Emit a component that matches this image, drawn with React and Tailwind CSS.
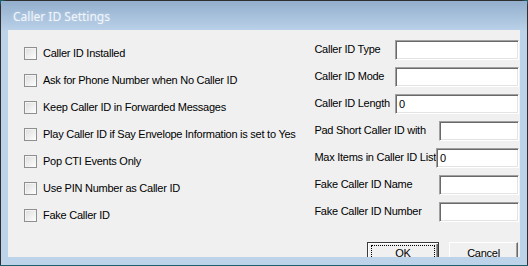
import React from 'react';

const checks = [
    'Caller ID Installed',
    'Ask for Phone Number when No Caller ID',
    'Keep Caller ID in Forwarded Messages',
    'Play Caller ID if Say Envelope Information is set to Yes',
    'Pop CTI Events Only',
    'Use PIN Number as Caller ID',
    'Fake Caller ID',
];

const fields = [
    { label: 'Caller ID Type', width: 'w-[124px]', value: '' },
    { label: 'Caller ID Mode', width: 'w-[124px]', value: '' },
    { label: 'Caller ID Length', width: 'w-[124px]', value: '0' },
    { label: 'Pad Short Caller ID with', width: 'w-[80px]', value: '' },
    { label: 'Max Items in Caller ID List', width: 'w-[83px]', value: '0' },
    { label: 'Fake Caller ID Name', width: 'w-[80px]', value: '' },
    { label: 'Fake Caller ID Number', width: 'w-[80px]', value: '' },
];

function CheckBox() {
    return (
        <span className="block h-[13px] w-[13px] shrink-0 border border-[#8e8f8f] bg-gradient-to-br from-[#dcdcdc] to-white shadow-[inset_1px_1px_0_#f4f4f4]" />
    );
}

function Field({ width, value }) {
    return (
        <div
            className={`${width} h-[20px] shrink-0 border border-t-[#a0a0a0] border-l-[#a0a0a0] border-b-white border-r-white bg-white pl-[3px] leading-[18px] shadow-[inset_1px_1px_0_#696969,inset_-1px_-1px_0_#e3e3e3]`}
        >
            {value}
        </div>
    );
}

export default function App() {
    return (
        <div
            className="h-[266px] w-[528px] overflow-hidden bg-[#1f5f6d] text-[11px] tracking-[-0.25px] text-black"
            style={{ fontFamily: '"Liberation Sans", Arial, sans-serif' }}
        >
            <div className="flex h-[265px] flex-col rounded-t-[6px] border border-[#2f2f2f] border-b-0 bg-[#bcd3ea]">
                {/* Title bar */}
                <div className="flex h-[29px] items-center bg-gradient-to-b from-[#93afcd] to-[#b9d0e8] pl-[12px] pt-[2px]">
                    <span
                        className="text-[12px] tracking-normal text-[#f2f6fb] [text-shadow:0_0_3px_#c6d8ec]"
                        style={{ fontFamily: '"Noto Sans", "Open Sans", sans-serif' }}
                    >
                        Caller ID Settings
                    </span>
                </div>

                {/* Client area */}
                <div className="mx-[7px] h-[227px] overflow-hidden bg-[#f0f0f0]">
                    <div className="flex">
                        {/* Checkboxes */}
                        <div className="flex w-[308px] flex-col pl-[16px] pt-[10px]">
                            {checks.map((c) => (
                                <div key={c} className="flex h-[27px] items-center gap-[6px] whitespace-nowrap">
                                    <CheckBox />
                                    <span>{c}</span>
                                </div>
                            ))}
                        </div>

                        {/* Text fields */}
                        <div className="flex flex-1 flex-col pt-[6px] pr-[1px]">
                            {fields.map((f) => (
                                <div key={f.label} className="flex h-[27px] items-center whitespace-nowrap">
                                    <span>{f.label}</span>
                                    <div className="ml-auto">
                                        <Field width={f.width} value={f.value} />
                                    </div>
                                </div>
                            ))}
                        </div>
                    </div>

                    {/* Buttons */}
                    <div className="mt-[13px] flex justify-end gap-[10px] pr-[2px]">
                        <button className="flex h-[23px] w-[72px] flex-col border border-[#3c3c3c] bg-[#f0f0f0] px-[3px] pt-[2px] shadow-[inset_1px_1px_0_#fff,inset_-1px_-1px_0_#696969,inset_-2px_-2px_0_#a0a0a0]">
                            <span className="block h-[16px] border border-dotted border-black pt-[1px] leading-[12px]">
                                <u>O</u>K
                            </span>
                        </button>
                        <button className="flex h-[23px] w-[69px] justify-center border border-t-white border-l-white border-b-[#696969] border-r-[#696969] bg-[#f0f0f0] pt-[4px] leading-[12px] shadow-[inset_-1px_-1px_0_#a0a0a0]">
                            <span>
                                <u>C</u>ancel
                            </span>
                        </button>
                    </div>
                </div>
            </div>
        </div>
    );
}
